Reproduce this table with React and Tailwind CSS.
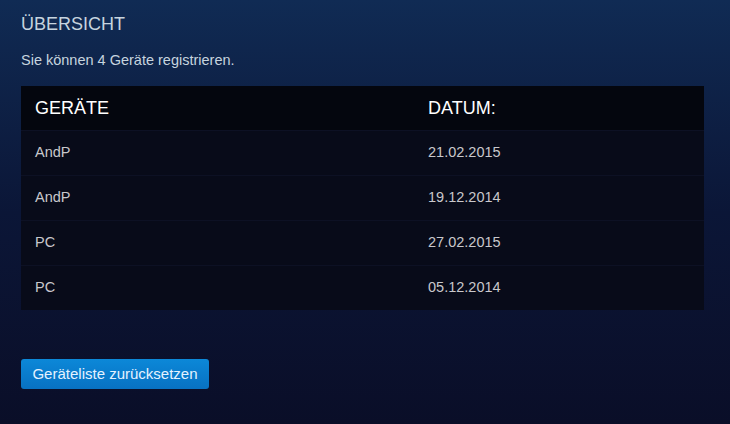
// Geräteübersicht
import React from 'react';

const devices = [
  { name: 'AndP', date: '21.02.2015' },
  { name: 'AndP', date: '19.12.2014' },
  { name: 'PC', date: '27.02.2015' },
  { name: 'PC', date: '05.12.2014' },
];

const App = () => {
  return (
    <div
      className="min-h-[424px] w-full bg-gradient-to-b from-[#102b54] via-[#0b1637] to-[#0a0e28] px-[21px] pt-[12px] pb-[35px] font-['Liberation_Sans',Arial,sans-serif]"
    >
      <h1 className="text-[18px] leading-[24px] text-[#c6d4df]">ÜBERSICHT</h1>
      <p className="mt-[15px] text-[14.5px] leading-[18px] text-[#c6d4df]">
        Sie können 4 Geräte registrieren.
      </p>

      <div className="mt-[17px] w-[683px] bg-[#080b19]">
        <div className="grid h-[44px] grid-cols-[393px_1fr] items-center bg-[#04060e] px-[14px] text-[18px] text-white">
          <span>GERÄTE</span>
          <span>DATUM:</span>
        </div>
        {devices.map((d, i) => (
          <div
            key={i}
            className="grid h-[45px] grid-cols-[393px_1fr] items-center border-t border-[#0d1124] px-[14px] text-[14.5px] text-[#c8c8cc]"
          >
            <span>{d.name}</span>
            <span>{d.date}</span>
          </div>
        ))}
      </div>

      <button className="mt-[49px] h-[30px] w-[188px] rounded-[3px] bg-gradient-to-b from-[#0c88d8] to-[#0871c2] text-[15px] text-[#e4f2ff]">
        Geräteliste zurücksetzen
      </button>
    </div>
  );
};

export default App;
